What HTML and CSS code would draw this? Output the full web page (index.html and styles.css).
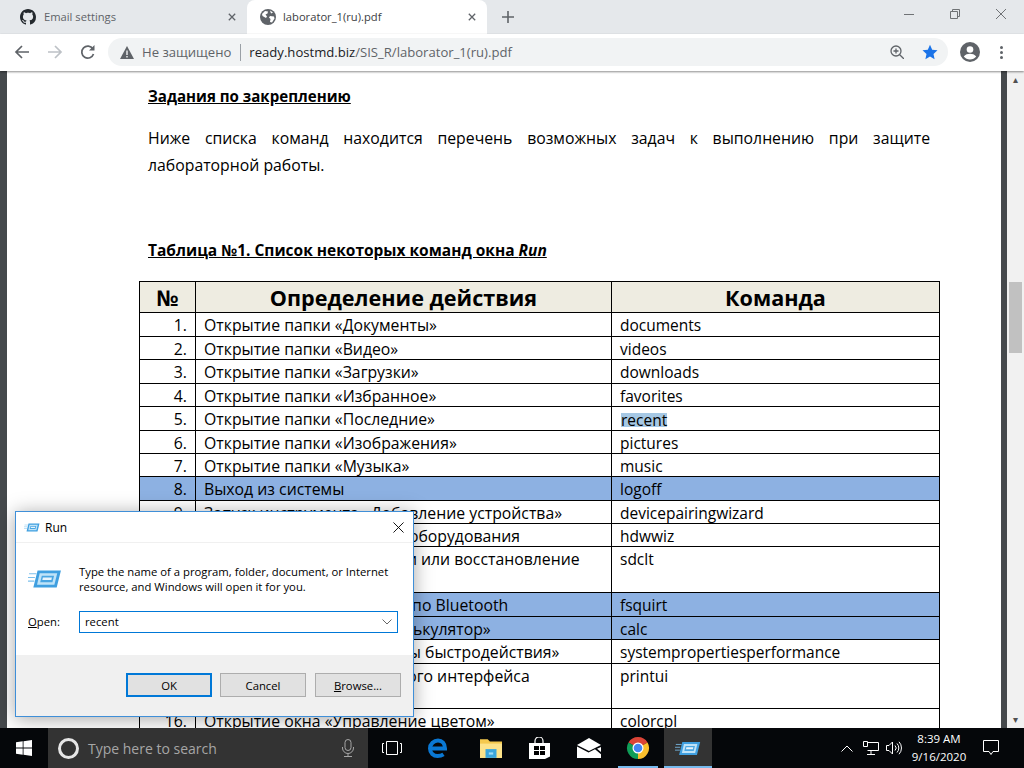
FILE: index.html
```html
<!DOCTYPE html>
<html lang="en">

<head>
    <meta charset="UTF-8">
    <title>laborator_1(ru).pdf</title>
    <link rel="stylesheet" href="styles.css">
</head>

<body>
    <div class="tabstrip">
        <div class="tab">
            <svg class="tab-icon" viewBox="0 0 16 16"><path fill="#24292e" d="M8 0C3.58 0 0 3.58 0 8c0 3.54 2.29 6.53 5.47 7.59.4.07.55-.17.55-.38 0-.19-.01-.82-.01-1.49-2.01.37-2.53-.49-2.69-.94-.09-.23-.48-.94-.82-1.13-.28-.15-.68-.52-.01-.53.63-.01 1.08.58 1.23.82.72 1.21 1.87.87 2.33.66.07-.52.28-.87.51-1.07-1.78-.2-3.64-.89-3.64-3.95 0-.87.31-1.59.82-2.15-.08-.2-.36-1.02.08-2.12 0 0 .67-.21 2.2.82.64-.18 1.32-.27 2-.27.68 0 1.36.09 2 .27 1.53-1.04 2.2-.82 2.2-.82.44 1.1.16 1.92.08 2.12.51.56.82 1.27.82 2.15 0 3.07-1.87 3.75-3.65 3.95.29.25.54.73.54 1.48 0 1.07-.01 1.93-.01 2.2 0 .21.15.46.55.38A8.013 8.013 0 0016 8c0-4.42-3.58-8-8-8z"/></svg>
            <span class="tab-title">Email settings</span>
            <svg class="tab-close" viewBox="0 0 10 10"><path d="M1 1l8 8M9 1l-8 8"/></svg>
        </div>
        <div class="tab tab-active">
            <svg class="tab-icon" viewBox="0 0 16 16"><circle cx="8" cy="8" r="8" fill="#5f6368"/><path fill="#fff" d="M2 5l3-3 3 .5-.5 2-2 1 1.500 2-1 1.500L2.500 7zM10 7l4 .5.5 2-2.500 4-2-.5.5-3-1.500-1.500zM10 1.500l3 2-2 1z"/></svg>
            <span class="tab-title">laborator_1(ru).pdf</span>
            <svg class="tab-close" viewBox="0 0 10 10"><path d="M1 1l8 8M9 1l-8 8"/></svg>
        </div>
        <svg class="new-tab" viewBox="0 0 12 12"><path d="M6 0v12M0 6h12"/></svg>
        <div class="window-btns">
            <svg viewBox="0 0 10 10"><path d="M0 5.500h10"/></svg>
            <svg viewBox="0 0 10 10"><path d="M.5 2.500h7v7h-7zM2.500 2.500v-2h7v7h-2"/></svg>
            <svg viewBox="0 0 10 10"><path d="M0 0l10 10M10 0L0 10"/></svg>
        </div>
    </div>

    <div class="toolbar">
        <svg class="nav" viewBox="0 0 16 16"><path d="M15 8H2M8 2L2 8l6 6"/></svg>
        <svg class="nav nav-off" viewBox="0 0 16 16"><path d="M1 8h13M8 2l6 6-6 6"/></svg>
        <svg class="nav" viewBox="0 0 16 16"><path d="M13.500 10a6 6 0 1 1-.6-5"/><path class="solid" d="M14.500 1v5.500H9z"/></svg>
        <div class="omnibox">
            <svg class="warn" viewBox="0 0 14 13"><path fill="#5f6368" d="M7 0l7 13H0z"/><path fill="#f1f3f4" d="M6.300 4.500h1.400v4.500H6.300zM6.300 10h1.400v1.400H6.300z"/></svg>
            <span class="not-secure">Не защищено</span>
            <span class="omni-sep"></span>
            <span class="url">ready.hostmd.biz<span class="url-path">/SIS_R/laborator_1(ru).pdf</span></span>
            <svg class="zoom-icon" viewBox="0 0 14 14"><circle cx="6" cy="6" r="5"/><path d="M9.700 9.700L14 14M3.500 6h5M6 3.500v5"/></svg>
            <svg class="star" viewBox="0 0 16 16"><path fill="#1a73e8" d="M8 .8l2.200 4.900 5.300.6-4 3.600 1.100 5.300L8 12.500l-4.600 2.700 1.100-5.300-4-3.600 5.300-.6z"/></svg>
        </div>
        <svg class="avatar" viewBox="0 0 20 20"><circle cx="10" cy="10" r="10" fill="#5f6368"/><circle cx="10" cy="7.500" r="3.300" fill="#fff"/><path fill="#fff" d="M3.800 14.500c1.500-2 4-2.700 6.200-2.700s4.700.7 6.200 2.700c-1.500 2-3.700 3-6.200 3s-4.700-1-6.200-3z"/></svg>
        <div class="menu-dots"><i></i><i></i><i></i></div>
    </div>

    <div class="viewer">
        <div class="pdf-side"></div>
        <div class="pdf-page">
            <h3 class="pdf-heading">Задания по закреплению</h3>
            <p class="pdf-text"><span class="pdf-line">Ниже списка команд находится перечень возможных задач к выполнению при защите</span> лабораторной работы.</p>
            <h3 class="pdf-heading table-caption">Таблица №1. Список некоторых команд окна <em>Run</em></h3>
            <table class="cmd-table">
                <colgroup>
                    <col class="col-num">
                    <col class="col-desc">
                    <col class="col-cmd">
                </colgroup>
                <thead>
                    <tr><th>№</th><th>Определение действия</th><th>Команда</th></tr>
                </thead>
                <tbody>
                    <tr class="h24"><td class="num">1.</td><td>Открытие папки «Документы»</td><td>documents</td></tr>
                    <tr><td class="num">2.</td><td>Открытие папки «Видео»</td><td>videos</td></tr>
                    <tr class="h24"><td class="num">3.</td><td>Открытие папки «Загрузки»</td><td>downloads</td></tr>
                    <tr><td class="num">4.</td><td>Открытие папки «Избранное»</td><td>favorites</td></tr>
                    <tr class="h24"><td class="num">5.</td><td>Открытие папки «Последние»</td><td><span class="selected">recent</span></td></tr>
                    <tr><td class="num">6.</td><td>Открытие папки «Изображения»</td><td>pictures</td></tr>
                    <tr><td class="num">7.</td><td>Открытие папки «Музыка»</td><td>music</td></tr>
                    <tr class="h24 marked"><td class="num">8.</td><td>Выход из системы</td><td>logoff</td></tr>
                    <tr><td class="num">9.</td><td>Запуск инструмента «Добавление устройства»</td><td>devicepairingwizard</td></tr>
                    <tr><td class="num">10.</td><td>Запуск мастера установки оборудования</td><td>hdwwiz</td></tr>
                    <tr class="h46"><td class="num">11.</td><td>Создание резервной копии или восстановление</td><td>sdclt</td></tr>
                    <tr class="h24 marked"><td class="num">12.</td><td>Отправка и прием файлов по Bluetooth</td><td>fsquirt</td></tr>
                    <tr class="marked"><td class="num">13.</td><td>Открытие программы «Калькулятор»</td><td>calc</td></tr>
                    <tr class="h24"><td class="num">14.</td><td>Открытие окна «Параметры быстродействия»</td><td>systempropertiesperformance</td></tr>
                    <tr class="h45"><td class="num">15.</td><td>Открытие пользовательского интерфейса</td><td>printui</td></tr>
                    <tr><td class="num">16.</td><td>Открытие окна «Управление цветом»</td><td>colorcpl</td></tr>
                </tbody>
            </table>
        </div>
        <div class="pdf-side pdf-side-right"></div>
        <div class="scrollbar">
            <div class="scroll-btn">&#9652;</div>
            <div class="scroll-track"><div class="scroll-thumb"></div></div>
            <div class="scroll-btn">&#9662;</div>
        </div>
    </div>

    <div class="taskbar">
        <div class="start">
            <svg viewBox="0 0 16 16"><path fill="#fff" d="M0 2.300l6.700-1v6.300H0zM7.500 1.200L16 0v7.600H7.500zM0 8.400h6.700v6.300l-6.700-1zM7.500 8.400H16V16l-8.500-1.200z"/></svg>
        </div>
        <div class="search">
            <span class="cortana"></span>
            <span class="search-text">Type here to search</span>
            <svg class="mic" viewBox="0 0 12 18"><rect x="3" y=".5" width="6" height="11" rx="3"/><path d="M.5 8v1a5.500 5.500 0 0 0 11 0V8M6 14.500V17M2 17.500h8"/></svg>
        </div>
        <div class="task-icons">
            <div class="task"><svg viewBox="0 0 20 14" class="taskview"><path d="M4.500.5h11v13h-11zM2 2.500H.5v9H2M18 2.500h1.500v9H18"/></svg></div>
            <div class="task task-edge"><svg viewBox="0 0 20 20" width="20" height="20"><path fill="none" stroke="#0a78d4" stroke-width="4" d="M3 10.500h14c0-5-3-8-7-8s-8 3.500-8 8 3.500 7.500 7.500 7.500c2.500 0 4.500-.7 6-1.700"/></svg></div>
            <div class="task"><svg viewBox="0 0 20 18" width="22" height="20"><path fill="#f5c94e" d="M0 1h7l2 2h11v15H0z"/><path fill="#fde38a" d="M0 5h20v13H0z"/><path fill="#3aa6dd" d="M5 10h10v8H5z"/><path fill="#9fdcf5" d="M8 13h4v2H8z"/></svg></div>
            <div class="task"><svg viewBox="0 0 21 22" width="21" height="22"><path fill="#fff" d="M0 6h21v13.500L16 22H0z"/><path fill="none" stroke="#fff" stroke-width="1.200" d="M6 7V4a4 4 0 0 1 8 0v3"/><path fill="#000" d="M5 9h5v4H5zM11 9h5v4h-5zM5 14h5v4H5zM11 14h5v4h-5z"/></svg></div>
            <div class="task"><svg viewBox="0 0 24 20" width="24" height="20"><path fill="#fff" d="M12 0l12 7-12 6L0 7z"/><path fill="#fff" d="M0 8.500l11.500 6 6.500-3.300 6 5V20H0z"/><path fill="#fff" d="M24 9v5l-4-3.300z"/></svg></div>
            <div class="task task-open"><svg viewBox="0 0 24 24" width="24" height="24"><path fill="#db4437" d="M12 12L2.470 6.500A11 11 0 0 1 21.530 6.500z"/><path fill="#fbc02d" d="M12 12l9.530-5.500A11 11 0 0 1 12 23z"/><path fill="#0f9d58" d="M12 12v11A11 11 0 0 1 2.470 6.500z"/><circle cx="12" cy="12" r="5.500" fill="#fff"/><circle cx="12" cy="12" r="4.300" fill="#4285f4"/></svg></div>
            <div class="task task-active"><svg class="run-task" viewBox="0 0 32 18"><use href="#runicon"/></svg></div>
        </div>
        <div class="tray">
            <svg class="tray-up" viewBox="0 0 12 7"><path d="M.5 6.500L6 1l5.500 5.500"/></svg>
            <svg class="tray-net" viewBox="0 0 16 14"><path d="M4.500 1.500h11v8h-11M8 9.500V13M4 13.500h8M.5.500h4v5h-4z"/></svg>
            <svg class="tray-vol" viewBox="0 0 16 14"><path d="M.5 4.500h2.500L6.500 1v12L3 9.500H.5zM9 4.500a3.500 3.500 0 0 1 0 5M11 2.500a6.500 6.500 0 0 1 0 9M13 .8a9 9 0 0 1 0 12.400"/></svg>
            <div class="clock"><span>8:39 AM</span><span>9/16/2020</span></div>
            <svg class="notif" viewBox="0 0 16 16"><path d="M.5.500h15v11H10l-2 3-2-3H.5z"/></svg>
        </div>
    </div>

    <div class="run-dialog">
        <div class="run-title">
            <svg class="run-small" viewBox="0 0 32 18"><use href="#runicon"/></svg>
            <span>Run</span>
            <svg class="run-x" viewBox="0 0 12 12"><path d="M.5.500l11 11M11.500.500l-11 11"/></svg>
        </div>
        <div class="run-body">
            <div class="run-info">
                <svg class="run-big" viewBox="0 0 32 18"><use href="#runicon"/></svg>
                <p>Type the name of a program, folder, document, or Internet resource, and Windows will open it for you.</p>
            </div>
            <div class="run-open">
                <label><u>O</u>pen:</label>
                <div class="run-input">
                    <span>recent</span>
                    <svg viewBox="0 0 10 6"><path d="M.5.500L5 5 9.500.500"/></svg>
                </div>
            </div>
        </div>
        <div class="run-footer">
            <button class="btn btn-default">OK</button>
            <button class="btn">Cancel</button>
            <button class="btn"><u>B</u>rowse...</button>
        </div>
    </div>

    <svg class="defs" width="0" height="0">
        <symbol id="runicon" viewBox="0 0 32 18">
            <path fill="#3f9fe0" d="M9 1h22l-4 16H5z"/>
            <path fill="#bfe3f8" d="M11 3.500h16.500l-2.700 11H8.500z"/>
            <path fill="#4aa6e2" d="M13 6h11.500l-1.500 6H11.500z"/>
            <path fill="#e8f4fc" d="M14 7.500h8.500L22 10h-8.500z"/>
            <path stroke="#7cc0ec" stroke-width="1" d="M1 4h7M0 7.500h6.500M0 11h6"/>
        </symbol>
    </svg>
</body>

</html>
```

FILE: styles.css
```css
* {
    box-sizing: border-box;
}

html,
body {
    margin: 0;
    height: 100%;
}

body {
    position: relative;
    width: 1024px;
    height: 768px;
    overflow: hidden;
    display: flex;
    flex-direction: column;
    font-family: "Open Sans", sans-serif;
}

svg {
    display: block;
    flex: none;
}

/* browser tabs */
.tabstrip {
    height: 34px;
    flex: none;
    display: flex;
    align-items: flex-end;
    background-color: #e5e8eb;
}

.tab {
    width: 247px;
    height: 34px;
    display: flex;
    align-items: center;
    padding: 0 10px 0 20px;
    font-size: 11.2px;
    color: #5f6368;
}

.tab-active {
    width: 240px;
    padding-left: 13px;
    background-color: #fff;
    border-radius: 8px 8px 0 0;
    color: #3c4043;
}

.tab-icon {
    width: 16px;
    height: 16px;
    margin-right: 8px;
}

.tab-active .tab-icon {
    margin-right: 7px;
}

.tab-title {
    flex: 1;
    margin-top: -2px;
}

.tab-close {
    width: 8px;
    height: 8px;
    margin-right: 1px;
    fill: none;
    stroke: #5f6368;
    stroke-width: 1.6;
}

.new-tab {
    width: 12px;
    height: 12px;
    margin: 0 0 11px 15px;
    fill: none;
    stroke: #5f6368;
    stroke-width: 1.600;
}

.window-btns {
    margin-left: auto;
    height: 34px;
    display: flex;
    align-items: flex-start;
    gap: 36px;
    padding: 9px 18px 0 0;
}

.window-btns svg {
    width: 10px;
    height: 10px;
    fill: none;
    stroke: #6f7275;
    stroke-width: 1;
}

/* address bar */
.toolbar {
    height: 37px;
    flex: none;
    display: flex;
    align-items: center;
    padding: 0 0 1px 14px;
    background-color: #fff;
    box-shadow: 0 1px 2px rgba(0, 0, 0, 0.45);
    position: relative;
    z-index: 2;
}

.nav {
    width: 16px;
    height: 16px;
    margin-right: 17px;
    fill: none;
    stroke: #5f6368;
    stroke-width: 1.700;
}

.nav .solid {
    fill: #5f6368;
    stroke: none;
}

.nav-off {
    stroke: #bdc1c6;
}

.omnibox {
    width: 840px;
    height: 28px;
    margin-left: -5px;
    display: flex;
    align-items: center;
    padding: 0 10px 0 12px;
    background-color: #f1f3f4;
    border-radius: 14px;
    font-size: 13.1px;
    color: #202124;
}

.warn {
    width: 14px;
    height: 13px;
    margin-right: 8px;
}

.not-secure {
    color: #5f6368;
}

.omni-sep {
    width: 1px;
    height: 17px;
    margin: 0 8px 0 9px;
    background-color: #9aa0a6;
}

.url-path {
    color: #5f6368;
}

.zoom-icon {
    width: 14px;
    height: 14px;
    margin-left: auto;
    margin-right: 18px;
    fill: none;
    stroke: #5f6368;
    stroke-width: 1.300;
}

.star {
    width: 16px;
    height: 16px;
}

.avatar {
    width: 20px;
    height: 20px;
    margin-left: 12px;
}

.menu-dots {
    display: flex;
    flex-direction: column;
    gap: 2px;
    margin-left: 20px;
}

.menu-dots i {
    width: 3px;
    height: 3px;
    border-radius: 50%;
    background-color: #5f6368;
}

/* pdf area */
.viewer {
    flex: 1;
    display: flex;
    min-height: 0;
    overflow: hidden;
}

.pdf-side {
    width: 7px;
    flex: none;
    background-color: #45494c;
}

.pdf-side-right {
    width: 6px;
}

.pdf-page {
    width: 994px;
    flex: none;
    padding: 16px 71px 0 141px;
    background-color: #fff;
    color: #000;
}

.pdf-heading {
    margin: 0;
    height: 19px;
    font-size: 15.1px;
    line-height: 19px;
    font-weight: 700;
    text-decoration: underline;
}

.pdf-text {
    margin: 19px 0 0;
    font-size: 15.8px;
    line-height: 27px;
}

.pdf-line {
    display: block;
    text-align: justify;
    text-align-last: justify;
}

.table-caption {
    margin-top: 62px;
    font-size: 15.5px;
}

.cmd-table {
    width: 801px;
    margin: 21px 0 0 -9px;
    table-layout: fixed;
    border-collapse: collapse;
}

.col-num {
    width: 56px;
}

.col-desc {
    width: 416px;
}

.cmd-table th {
    height: 31px;
    padding: 2px 0 0;
    background-color: #eeece1;
    border: 1px solid #000;
    font-size: 21.6px;
    line-height: 24px;
    font-weight: 700;
}

.cmd-table td {
    height: 23px;
    padding: 3px 8px 0;
    border: 1px solid #000;
    font-size: 15.8px;
    line-height: 19px;
    vertical-align: top;
}

.cmd-table td:last-child {
    font-size: 15.5px;
}

.cmd-table tr.h24 td {
    height: 24px;
}

.cmd-table tr.h45 td {
    height: 45px;
}

.cmd-table tr.h46 td {
    height: 46px;
}

.cmd-table td.num {
    text-align: right;
}

.marked td {
    background-color: #8db1e2;
}

.selected {
    display: inline-block;
    margin: 3px 0 0 1px;
    vertical-align: top;
    line-height: 14px;
    background-color: #a6c8e4;
}

/* scrollbar */
.scrollbar {
    width: 17px;
    flex: none;
    display: flex;
    flex-direction: column;
    background-color: #f1f1f1;
}

.scroll-btn {
    height: 17px;
    flex: none;
    font-size: 10px;
    line-height: 17px;
    text-align: center;
    color: #505050;
}

.scroll-track {
    flex: 1;
    padding: 194px 2px 0;
}

.scroll-thumb {
    height: 71px;
    background-color: #c1c1c1;
}

/* windows taskbar */
.taskbar {
    height: 40px;
    flex: none;
    display: flex;
    background-color: #05070a;
    color: #fff;
    position: relative;
    z-index: 3;
}

.start {
    width: 48px;
    display: flex;
    align-items: center;
    justify-content: center;
}

.start svg {
    width: 16px;
    height: 16px;
}

.search {
    width: 320px;
    display: flex;
    align-items: center;
    padding: 0 14px 0 10px;
    background-color: #333;
    font-size: 14px;
    color: #a6a6a6;
}

.cortana {
    width: 21px;
    height: 21px;
    margin-right: 9px;
    border: 3px solid #e6e6e6;
    border-radius: 50%;
}

.search-text {
    flex: 1;
}

.mic {
    width: 12px;
    height: 18px;
    fill: none;
    stroke: #a6a6a6;
    stroke-width: 1;
}

.task-icons {
    display: flex;
}

.task {
    width: 48px;
    height: 40px;
    margin-right: 1.3px;
    display: flex;
    align-items: center;
    justify-content: center;
}

.task-edge svg {
    margin-right: 6px;
}

.taskview {
    width: 20px;
    height: 14px;
    fill: none;
    stroke: #fff;
    stroke-width: 1;
}

.task-open {
    background: linear-gradient(#76b9ed, #76b9ed) center bottom / 40px 2px no-repeat;
}

.task-active {
    background-color: #333;
    box-shadow: inset 0 -2px 0 #76b9ed;
}

.run-task {
    width: 26px;
    height: 15px;
}

.tray {
    margin-left: auto;
    display: flex;
    align-items: center;
    padding-right: 25px;
}

.tray svg {
    fill: none;
    stroke: #fff;
    stroke-width: 1;
}

.tray-up {
    width: 12px;
    height: 7px;
    margin-right: 10px;
}

.tray-net {
    width: 16px;
    height: 14px;
    margin-right: 7px;
}

.tray-vol {
    width: 16px;
    height: 14px;
    margin-right: 5px;
}

.clock {
    width: 64px;
    display: flex;
    flex-direction: column;
    align-items: center;
    font-size: 11.500px;
    line-height: 18px;
    margin-right: 12px;
}

.notif {
    width: 16px;
    height: 16px;
}

/* run dialog */
.run-dialog {
    position: absolute;
    left: 15px;
    top: 511px;
    z-index: 2;
    width: 399px;
    height: 206px;
    display: flex;
    flex-direction: column;
    background-color: #fff;
    border: 1px solid #3f8fd8;
    box-shadow: 0 2px 18px rgba(0, 0, 0, 0.35);
    font-size: 11.3px;
    color: #000;
}

.run-title {
    height: 31px;
    flex: none;
    display: flex;
    align-items: center;
    padding: 0 9px 0 8px;
    border-bottom: 1px solid #f0f0f0;
    font-size: 12px;
}

.run-small {
    width: 16px;
    height: 11px;
    margin-right: 5px;
}

.run-x {
    width: 11px;
    height: 11px;
    margin-left: auto;
    fill: none;
    stroke: #000;
    stroke-width: 1;
}

.run-body {
    flex: 1;
    padding: 21px 15px 0 12px;
}

.run-info {
    display: flex;
}

.run-big {
    width: 34px;
    height: 22px;
    margin: 4px 17px 0 0;
}

.run-info p {
    margin: 0;
    line-height: 15px;
}

.run-open {
    display: flex;
    align-items: center;
    margin-top: 17px;
}

.run-open label {
    width: 51px;
    margin-top: -2px;
}

.run-input {
    flex: 1;
    height: 22px;
    display: flex;
    align-items: center;
    justify-content: space-between;
    padding: 0 5px;
    border: 1px solid #0078d7;
}

.run-input span {
    margin-top: -2px;
}

.run-input svg {
    width: 10px;
    height: 6px;
    fill: none;
    stroke: #666;
    stroke-width: 1;
}

.run-footer {
    height: 61px;
    flex: none;
    display: flex;
    gap: 8px;
    padding: 18px 0 0 110px;
    background-color: #f0f0f0;
}

.btn {
    width: 86px;
    height: 24px;
    padding: 0;
    background-color: #e1e1e1;
    border: 1px solid #adadad;
    font-family: "Open Sans", sans-serif;
    font-size: 11.3px;
    color: #000;
}

.btn:last-child {
    margin-left: 1px;
}

.btn-default {
    border: 2px solid #0078d7;
}

.defs {
    position: absolute;
}
```
